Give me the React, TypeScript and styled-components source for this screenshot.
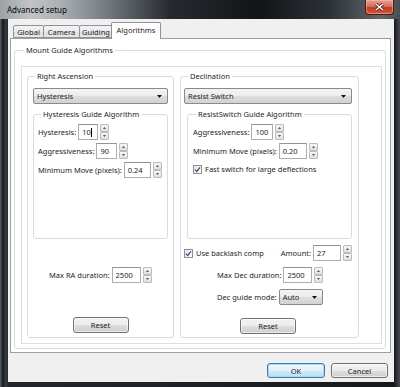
import React from 'react';
import styled, { createGlobalStyle } from 'styled-components';

const GlobalStyle = createGlobalStyle`
  * { box-sizing: border-box; }
  html, body { margin: 0; padding: 0; background: #1b1e22; }
  body {
    font-family: 'Noto Sans', 'Liberation Sans', sans-serif;
    font-size: 7.5px;
    color: #1e1e1e;
  }
`;

const Window = styled.div`
  width: 400px;
  height: 387px;
  display: flex;
  flex-direction: column;
  overflow: hidden;
  background: linear-gradient(90deg, #5a6066 0px, #16191c 3px, #3a3f45 6px, #23272b 8px, #1d2024 50%, #16191c 394px, #474c52 400px);
`;

const Caption = styled.div`
  height: 19px;
  flex: none;
  display: flex;
  justify-content: space-between;
  align-items: flex-start;
  padding: 0 6px 0 4px;
  background-color: #a9afb3;
  background-image: linear-gradient(90deg, #9ba1a6 0px, #c0c4c7 30px, #aab0b4 60px, #70767c 110px, #262a2e 170px, #121518 260px, #2d3237 330px, #5f656b 380px, #4a4f55 400px);
`;

const CaptionText = styled.span`
  margin-top: 4px;
  padding: 1px 3px;
  font-family: 'Noto Sans', 'Liberation Sans', sans-serif;
  font-size: 8px;
  line-height: 10px;
  color: #050505;
`;

const CloseButton = styled.div`
  width: 29px;
  height: 15px;
  display: flex;
  align-items: center;
  justify-content: center;
  border: 1px solid #4b1a12;
  border-top: none;
  border-radius: 0 0 4px 4px;
  background: linear-gradient(#e8a093 0%, #d7705e 45%, #c13a22 55%, #d65a3a 100%);
  box-shadow: inset 0 0 0 1px rgba(255, 200, 190, 0.45);
`;

const Client = styled.div`
  flex: 1;
  margin: 0 6px 5px 8px;
  display: flex;
  flex-direction: column;
  background: #f0f0f0;
`;

const TabStrip = styled.div`
  height: 20px;
  margin-bottom: -1px;
  padding-left: 5px;
  display: flex;
  align-items: flex-end;
  position: relative;
  z-index: 1;
`;

const Tab = styled.div<{ $w: number; $active?: boolean }>`
  width: ${({ $w }) => $w}px;
  height: ${({ $active }) => ($active ? 17 : 13)}px;
  margin-bottom: ${({ $active }) => ($active ? 0 : 1)}px;
  margin-left: ${({ $active }) => ($active ? -2 : -1)}px;
  display: flex;
  align-items: center;
  justify-content: center;
  padding-bottom: ${({ $active }) => ($active ? 2 : 0)}px;
  border: 1px solid #8e9299;
  border-bottom: ${({ $active }) => ($active ? 'none' : '1px solid #8e9299')};
  border-radius: 2px 2px 0 0;
  background: ${({ $active }) =>
    $active ? '#ffffff' : 'linear-gradient(#f3f3f3 0%, #ebebeb 50%, #dedede 51%, #e6e6e6 100%)'};
  white-space: nowrap;
  &:first-child { margin-left: 0; }
`;

const TabPanel = styled.div`
  height: 315px;
  margin: 0 3px 0 2px;
  padding: 6px 4px 3px 3px;
  display: flex;
  background: #ffffff;
  border: 1px solid #9a9ea5;
`;

const GroupBox = styled.fieldset`
  margin: 0;
  min-width: 0;
  border: 1px solid #d6dde2;
  border-radius: 3px;
`;

const Legend = styled.legend<{ $x?: number }>`
  margin-left: ${({ $x }) => $x ?? 3}px;
  padding: 0 2px;
  font-size: 7.5px;
  line-height: 10px;
  white-space: nowrap;
`;

const MountGroup = styled(GroupBox)`
  flex: 1;
  display: flex;
  padding: 11px 3px 4px 6px;
`;

const InnerFrame = styled.div`
  flex: 1;
  display: flex;
  gap: 6px;
  padding: 4px 5px 5px 5px;
  border: 1px solid #dedede;
`;

const AxisGroup = styled(GroupBox)<{ $w: number; $padL: number; $padR: number }>`
  width: ${({ $w }) => $w}px;
  flex: none;
  display: flex;
  flex-direction: column;
  padding: 7px ${({ $padR }) => $padR}px 0 ${({ $padL }) => $padL}px;
`;

const AlgoGroup = styled(GroupBox)<{ $padL: number; $ml?: number }>`
  height: 130px;
  margin-top: 5px;
  margin-left: ${({ $ml }) => $ml ?? 0}px;
  display: flex;
  flex-direction: column;
  gap: 3px;
  padding: 5px 4px 0 ${({ $padL }) => $padL}px;
`;

const Combo = styled.div<{ $w?: number }>`
  height: 16px;
  width: ${({ $w }) => ($w ? `${$w}px` : 'auto')};
  flex: none;
  display: flex;
  align-items: center;
  justify-content: space-between;
  padding: 0 5px 0 3px;
  border: 1px solid #8a8a8a;
  border-radius: 2px;
  background: linear-gradient(#f4f4f4 0%, #ececec 50%, #dedede 51%, #d2d2d2 100%);
`;

const FieldRow = styled.div<{ $indent?: number; $top?: number; $spread?: boolean }>`
  height: 16px;
  flex: none;
  display: flex;
  align-items: center;
  justify-content: ${({ $spread }) => ($spread ? 'space-between' : 'flex-start')};
  padding-left: ${({ $indent }) => $indent ?? 0}px;
  margin-top: ${({ $top }) => $top ?? 0}px;
  white-space: nowrap;
`;

const Cluster = styled.div`
  display: flex;
  align-items: center;
`;

const FieldLabel = styled.span`
  margin-right: 2px;
`;

const NumberBox = styled.div<{ $w: number }>`
  width: ${({ $w }) => $w}px;
  height: 16px;
  display: flex;
  align-items: center;
  padding-left: 3px;
  border: 1px solid #abadb3;
  border-top-color: #8f939b;
  background: #ffffff;
`;

const Caret = styled.span`
  width: 1px;
  height: 9px;
  background: #000;
`;

const SpinBox = styled.div`
  width: 9px;
  height: 16px;
  margin-left: 2px;
  display: flex;
  flex-direction: column;
`;

const SpinHalf = styled.div`
  flex: 1;
  display: flex;
  align-items: center;
  justify-content: center;
  border: 1px solid #b9bcc0;
  border-radius: 1px;
  background: linear-gradient(#f6f6f6, #e0e0e0);
`;

const CheckLine = styled.div<{ $top?: number }>`
  height: 12px;
  display: flex;
  align-items: center;
  gap: 3px;
  margin-top: ${({ $top }) => $top ?? 0}px;
  white-space: nowrap;
`;

const PushButton = styled.div<{ $w: number; $h?: number; $default?: boolean }>`
  width: ${({ $w }) => $w}px;
  height: ${({ $h }) => $h ?? 16}px;
  flex: none;
  display: flex;
  align-items: center;
  justify-content: center;
  border: 1px solid ${({ $default }) => ($default ? '#3c7fb1' : '#707070')};
  border-radius: 3px;
  background: ${({ $default }) =>
    $default
      ? 'linear-gradient(#eef7fc 0%, #e3f1f9 50%, #cfe7f5 51%, #c2e0f2 100%)'
      : 'linear-gradient(#f3f3f3 0%, #ebebeb 50%, #dddddd 51%, #cfcfcf 100%)'};
  box-shadow: ${({ $default }) =>
    $default ? 'inset 0 0 0 1px #9fdaf6' : 'inset 0 0 0 1px rgba(255,255,255,0.6)'};
`;

const ResetButton = styled(PushButton)<{ $top: number }>`
  align-self: center;
  margin-top: ${({ $top }) => $top}px;
`;

const Footer = styled.div`
  flex: 1;
  display: flex;
  justify-content: flex-end;
  align-items: flex-start;
  gap: 6px;
  padding: 10px 6px 0 0;
`;

const DropArrow = () => (
  <svg width="5" height="3" viewBox="0 0 5 3">
    <path d="M0 0 H5 L2.5 3 Z" fill="#111" />
  </svg>
);

const Spin = () => (
  <SpinBox>
    <SpinHalf>
      <svg width="3" height="2" viewBox="0 0 3 2">
        <path d="M0 2 H3 L1.5 0 Z" fill="#555" />
      </svg>
    </SpinHalf>
    <SpinHalf>
      <svg width="3" height="2" viewBox="0 0 3 2">
        <path d="M0 0 H3 L1.5 2 Z" fill="#555" />
      </svg>
    </SpinHalf>
  </SpinBox>
);

const CheckBox = () => (
  <svg width="9" height="9" viewBox="0 0 9 9">
    <defs>
      <linearGradient id="cbfill" x1="0" y1="0" x2="1" y2="1">
        <stop offset="0" stopColor="#e4e4e4" />
        <stop offset="1" stopColor="#ffffff" />
      </linearGradient>
    </defs>
    <rect x="0.5" y="0.5" width="8" height="8" fill="url(#cbfill)" stroke="#8e8f8f" />
    <path d="M2 4.6 L3.7 6.4 L7 2.4" fill="none" stroke="#3f5380" strokeWidth="1.3" />
  </svg>
);

const SpinField = ({ label, value, w, caret }: { label: string; value: string; w: number; caret?: boolean }) => (
  <Cluster>
    <FieldLabel>{label}</FieldLabel>
    <NumberBox $w={w}>
      {value}
      {caret && <Caret />}
    </NumberBox>
    <Spin />
  </Cluster>
);

export default function App() {
  return (
    <>
      <GlobalStyle />
      <Window>
        <Caption>
          <CaptionText>Advanced setup</CaptionText>
          <CloseButton>
            <svg width="9" height="8" viewBox="0 0 9 8">
              <path d="M1 1 L8 7 M8 1 L1 7" stroke="#5a1a10" strokeWidth="3" />
              <path d="M1 1 L8 7 M8 1 L1 7" stroke="#ffffff" strokeWidth="1.6" />
            </svg>
          </CloseButton>
        </Caption>
        <Client>
          <TabStrip>
            <Tab $w={31}>Global</Tab>
            <Tab $w={37}>Camera</Tab>
            <Tab $w={34}>Guiding</Tab>
            <Tab $w={50} $active>Algorithms</Tab>
          </TabStrip>
          <TabPanel>
            <MountGroup>
              <Legend $x={3}>Mount Guide Algorithms</Legend>
              <InnerFrame>
                <AxisGroup $w={147} $padL={5} $padR={5}>
                  <Legend $x={2}>Right Ascension</Legend>
                  <Combo>
                    Hysteresis
                    <DropArrow />
                  </Combo>
                  <AlgoGroup $padL={4}>
                    <Legend $x={3}>Hysteresis Guide Algorithm</Legend>
                    <FieldRow>
                      <SpinField label="Hysteresis:" value="10" w={20} caret />
                    </FieldRow>
                    <FieldRow>
                      <SpinField label="Aggressiveness:" value="90" w={21} />
                    </FieldRow>
                    <FieldRow>
                      <SpinField label="Minimum Move (pixels):" value="0.24" w={27} />
                    </FieldRow>
                  </AlgoGroup>
                  <FieldRow $indent={16} $top={28}>
                    <SpinField label="Max RA duration:" value="2500" w={29} />
                  </FieldRow>
                  <ResetButton $w={56} $top={34}>
                    Reset
                  </ResetButton>
                </AxisGroup>

                <AxisGroup $w={179} $padL={3} $padR={6}>
                  <Legend $x={4}>Declination</Legend>
                  <Combo>
                    Resist Switch
                    <DropArrow />
                  </Combo>
                  <AlgoGroup $padL={5} $ml={3}>
                    <Legend $x={3}>ResistSwitch Guide Algorithm</Legend>
                    <FieldRow>
                      <SpinField label="Aggressiveness:" value="100" w={22} />
                    </FieldRow>
                    <FieldRow>
                      <SpinField label="Minimum Move (pixels):" value="0.20" w={28} />
                    </FieldRow>
                    <CheckLine $top={1}>
                      <CheckBox />
                      Fast switch for large deflections
                    </CheckLine>
                  </AlgoGroup>
                  <FieldRow $top={6} $spread>
                    <CheckLine>
                      <CheckBox />
                      Use backlash comp
                    </CheckLine>
                    <SpinField label="Amount:" value="27" w={28} />
                  </FieldRow>
                  <FieldRow $indent={33} $top={6}>
                    <SpinField label="Max Dec duration:" value="2500" w={29} />
                  </FieldRow>
                  <FieldRow $indent={33} $top={6}>
                    <FieldLabel>Dec guide mode:</FieldLabel>
                    <Combo $w={44}>
                      Auto
                      <DropArrow />
                    </Combo>
                  </FieldRow>
                  <ResetButton $w={56} $top={13}>
                    Reset
                  </ResetButton>
                </AxisGroup>
              </InnerFrame>
            </MountGroup>
          </TabPanel>
          <Footer>
            <PushButton $w={58} $h={15} $default>
              OK
            </PushButton>
            <PushButton $w={57} $h={15}>
              Cancel
            </PushButton>
          </Footer>
        </Client>
      </Window>
    </>
  );
}
